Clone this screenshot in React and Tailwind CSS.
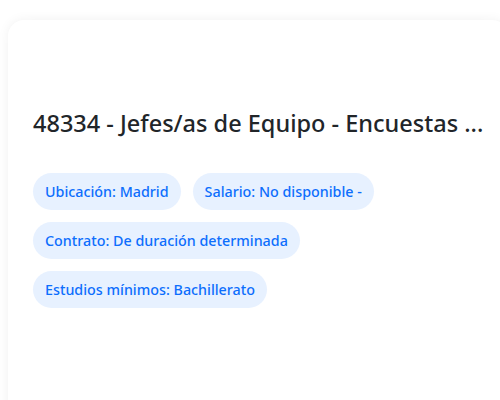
export default function App() {
  const chip = "inline-flex items-center h-[37px] px-3 rounded-full bg-[#e7f1ff] text-[#0d6efd] text-[14.3px] font-medium";
  return (
    <div className="w-[500px] h-[400px] overflow-hidden bg-white" style={{ fontFamily: '"Noto Sans", sans-serif' }}>
      <div className="ml-[8px] mt-[20px] w-[500px] h-[420px] rounded-2xl bg-white shadow-[0_0_12px_rgba(0,0,0,0.06)] px-[25px] pt-[89px]">
        <h1 className="text-[23.5px] leading-[29px] font-medium text-[#212529] whitespace-nowrap">48334 - Jefes/as de Equipo - Encuestas ...</h1>
        <div className="mt-[35px] flex flex-wrap gap-3 w-[360px]">
          <span className={chip}>Ubicación: Madrid</span>
          <span className={chip}>Salario: No disponible -</span>
          <span className={chip}>Contrato: De duración determinada</span>
          <span className={chip}>Estudios mínimos: Bachillerato</span>
        </div>
      </div>
    </div>
  );
}
